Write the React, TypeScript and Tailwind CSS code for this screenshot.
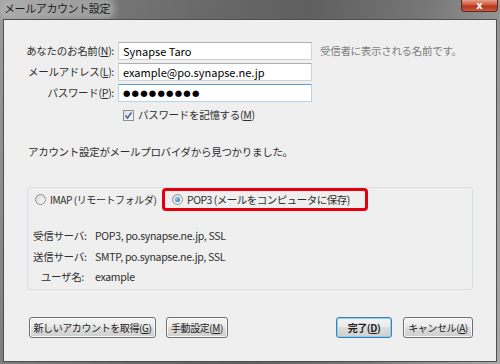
import React from 'react'

function Radio({ checked }: { checked?: boolean }) {
  return (
    <span className="w-[11px] h-[11px] rounded-full border border-[#8e8f8f] bg-[linear-gradient(135deg,#dcdcdc,#f8f8f8)] flex items-center justify-center shrink-0">
      {checked && <span className="w-[5px] h-[5px] rounded-full bg-[radial-gradient(circle_at_35%_35%,#8fd0ff,#1f5f9f)]" />}
    </span>
  )
}

function Btn({ children, primary, w }: { children: React.ReactNode; primary?: boolean; w: string }) {
  return (
    <button
      className={`${w} h-[21px] rounded-[3px] border whitespace-nowrap text-[10px] tracking-[-0.4px] text-[#1e1e1e] bg-[linear-gradient(#f3f3f3_0%,#ebebeb_45%,#dddddd_50%,#cfcfcf_100%)] flex items-center justify-center ${
        primary ? 'border-[#3c7fb1] shadow-[inset_0_0_0_1px_#8ed0f5]' : 'border-[#707070] shadow-[inset_0_0_0_1px_#fbfbfb]'
      }`}
    >
      {children}
    </button>
  )
}

export default function App() {
  return (
    <div className="w-[500px] h-[364px] flex flex-col px-[3px] pb-[2px] bg-[linear-gradient(100deg,#9c9c9c_0%,#7d7d7d_12%,#6a6a6a_35%,#5f5f5f_55%,#767676_75%,#9a9a9a_92%,#a8a8a8_100%)] font-['Noto_Sans_CJK_JP',sans-serif] whitespace-nowrap">
      {/* Title bar */}
      <div className="h-[19px] flex items-start justify-between">
        <span className="mt-[1px] px-[1px] text-[11px] leading-[15px] tracking-[-0.4px] text-[#1c1c1c] bg-[#b9b9b9]/60 rounded-[6px] shadow-[0_0_6px_4px_rgba(190,190,190,0.6)]">
          メールアカウント設定
        </span>
        <div className="w-[37px] h-[12px] -mr-[1px] rounded-b-[4px] border border-t-0 border-[#5a2a20] bg-[linear-gradient(#e8a08a_0%,#d0523a_45%,#b5321c_55%,#c9603f_100%)] flex items-center justify-center">
          <span className="text-white text-[10px] leading-[10px] font-bold font-['DejaVu_Sans',sans-serif]">x</span>
        </div>
      </div>

      {/* Client area */}
      <div className="flex-1 bg-[#efefef] border border-[#4f4f4f] flex flex-col text-[10.5px] leading-[14px] tracking-[-0.3px] text-[#2e2e2e]">
        <div className="mt-[22px] grid grid-cols-[110px_194px_auto] gap-x-[4px] gap-y-[3px] items-center">
          <span className="text-right">あなたのお名前(<u>N</u>):</span>
          <div className="h-[18px] bg-white border border-[#d2d2d2] border-t-[#abadb3] flex items-center pl-[4px] text-[11px] tracking-normal text-black">Synapse Taro</div>
          <span className="ml-[4px] text-[#7d7d7d]">受信者に表示される名前です。</span>

          <span className="text-right">メールアドレス(<u>L</u>):</span>
          <div className="h-[18px] bg-white border border-[#d2d2d2] border-t-[#abadb3] flex items-center pl-[4px] text-[11px] tracking-normal text-black">example@po.synapse.ne.jp</div>
          <span />

          <span className="text-right">パスワード(<u>P</u>):</span>
          <div className="h-[18px] bg-white border border-[#b5d4e8] border-t-[#5d9ccc] flex items-center pl-[4px] text-[8.5px] tracking-[1.2px] text-black font-['DejaVu_Sans',sans-serif]">●●●●●●●●●</div>
          <span />
        </div>

        <div className="mt-[6px] ml-[119px] h-[14px] flex items-center gap-[4px]">
          <span className="w-[11px] h-[11px] border border-[#8e8f8f] bg-[linear-gradient(135deg,#dcdcdc,#f8f8f8)] flex items-center justify-center">
            <svg width="9" height="9" viewBox="0 0 9 9">
              <path d="M1.5 4.5 L3.5 7 L7.5 1.5" fill="none" stroke="#4a5f97" strokeWidth="1.5" />
            </svg>
          </span>
          <span>パスワードを記憶する(<u>M</u>)</span>
        </div>

        <p className="mt-[23px] ml-[24px]">アカウント設定がメールプロバイダから見つかりました。</p>

        {/* Group box */}
        <div className="mt-[28px] ml-[23px] w-[446px] h-[103px] border border-[#d5dfe5] rounded-[3px] flex flex-col">
          <div className="flex items-center h-[23px]">
            <div className="ml-[7px] w-[127px] flex items-center gap-[4px] text-[10px]">
              <Radio />
              <span className="tracking-[-0.4px]">IMAP (リモートフォルダ)</span>
            </div>
            <div className="h-[23px] w-[206px] border-[3px] border-[#e2000d] rounded-[4px] flex items-center pl-[7px] gap-[4px]">
              <Radio checked />
              <span className="tracking-[-0.5px]">POP3 (メールをコンピュータに保存)</span>
            </div>
          </div>

          <div className="mt-[18px] ml-[5px] grid grid-cols-[51px_auto] gap-x-[11px] gap-y-[6.5px]">
            <span className="text-right">受信サーバ:</span>
            <span>POP3, po.synapse.ne.jp, SSL</span>
            <span className="text-right">送信サーバ:</span>
            <span>SMTP, po.synapse.ne.jp, SSL</span>
            <span className="text-right">ユーザ名:</span>
            <span>example</span>
          </div>
        </div>

        {/* Buttons */}
        <div className="mt-[27px] ml-[25px] mr-[23px] flex items-center">
          <Btn w="w-[127px]">新しいアカウントを取得(<u>G</u>)</Btn>
          <div className="ml-[10px]">
            <Btn w="w-[62px]">手動設定(<u>M</u>)</Btn>
          </div>
          <div className="ml-auto flex items-center gap-[11px]">
            <Btn w="w-[56px]" primary>
              <span className="font-bold">完了(<u>D</u>)</span>
            </Btn>
            <Btn w="w-[70px]">キャンセル(<u>A</u>)</Btn>
          </div>
        </div>
      </div>
    </div>
  )
}
